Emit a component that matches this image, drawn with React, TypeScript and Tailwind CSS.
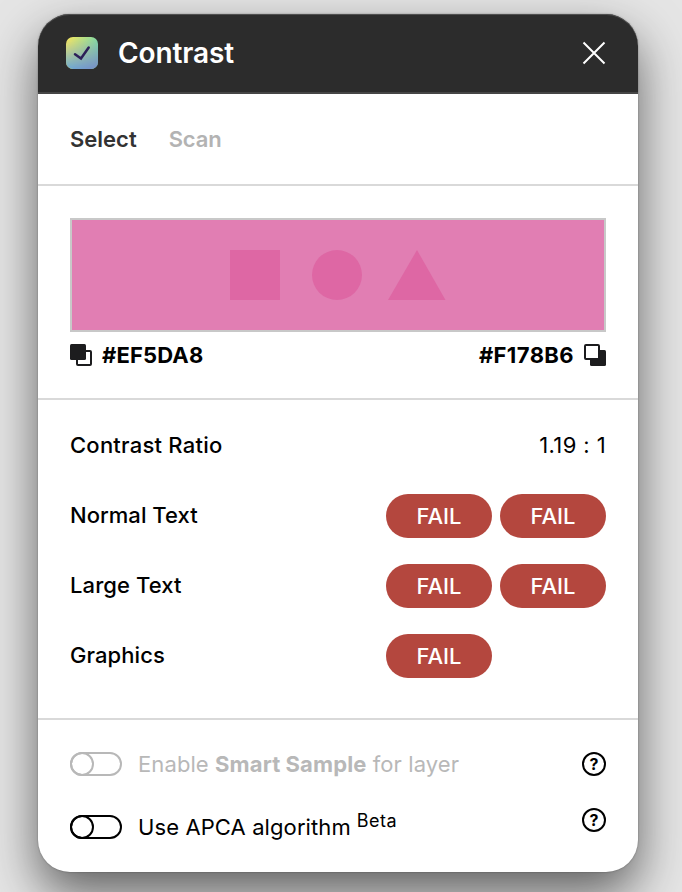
import type { ReactNode } from "react";

function Fail() {
  return (
    <span className="flex h-[44px] w-[106px] items-center justify-center rounded-full bg-[#b4473e] pb-px text-[22px] font-medium leading-7 text-white">
      FAIL
    </span>
  );
}

function Row({ label, tracking, children }: { label: string; tracking: string; children: ReactNode }) {
  return (
    <div className="flex h-[70px] items-center justify-between">
      <span className={`-mt-0.5 text-[22px] font-medium leading-7 ${tracking}`}>{label}</span>
      {children}
    </div>
  );
}

function Toggle() {
  return (
    <svg width="52" height="24" viewBox="0 0 52 24" fill="none" stroke="currentColor" strokeWidth="2">
      <rect x="1" y="1" width="50" height="22" rx="11" />
      <circle cx="12" cy="12" r="11" />
    </svg>
  );
}

function Help() {
  return (
    <span className="flex size-6 items-center justify-center rounded-full border-2 border-black text-[16px] font-bold leading-none text-black">
      ?
    </span>
  );
}

function Swap({ kind }: { kind: "fore" | "back" }) {
  return (
    <svg width="22" height="22" viewBox="0 0 22 22" fill="none">
      {kind === "fore" ? (
        <>
          <rect x="7" y="7" width="14" height="14" rx="1" stroke="#1c1c1e" strokeWidth="2" />
          <rect width="16" height="16" rx="1.5" fill="#1c1c1e" />
        </>
      ) : (
        <>
          <rect x="6" y="6" width="16" height="16" rx="1.5" fill="#1c1c1e" />
          <rect x="1" y="1" width="14" height="14" rx="1" fill="#fff" stroke="#1c1c1e" strokeWidth="2" />
        </>
      )}
    </svg>
  );
}

export default function App() {
  return (
    <div className="h-[892px] w-[682px] overflow-hidden bg-[#e5e5e5] pl-[38px] pt-[14px] font-['Inter',sans-serif] text-black">
      <main className="h-[858px] w-[600px] rounded-[32px] bg-white shadow-[0_0_2px_rgba(0,0,0,0.35),0_22px_50px_rgba(0,0,0,0.58)]">
        <header className="flex h-[80px] items-center rounded-t-[32px] border-b-2 border-[#464646] bg-[#2c2c2c] pl-7 pr-8 shadow-[inset_0_1px_0_#505050]">
          <svg width="32" height="32" viewBox="0 0 32 32" fill="none">
            <defs>
              <linearGradient id="top" x1="0" y1="0" x2="32" y2="0" gradientUnits="userSpaceOnUse">
                <stop stopColor="#ffe959" />
                <stop offset="1" stopColor="#82dda4" />
              </linearGradient>
              <linearGradient id="bottom" x1="0" y1="0" x2="32" y2="0" gradientUnits="userSpaceOnUse">
                <stop stopColor="#6cacd4" />
                <stop offset="1" stopColor="#788bc8" />
              </linearGradient>
              <linearGradient id="fade" x1="0" y1="0" x2="0" y2="32" gradientUnits="userSpaceOnUse">
                <stop stopColor="#000" />
                <stop offset="1" stopColor="#fff" />
              </linearGradient>
              <mask id="blend">
                <rect width="32" height="32" fill="url(#fade)" />
              </mask>
            </defs>
            <rect width="32" height="32" rx="7" fill="url(#top)" />
            <rect width="32" height="32" rx="7" fill="url(#bottom)" mask="url(#blend)" />
            <path d="M9 17.2L15 21.5L22.7 10.5" stroke="#2c1f58" strokeWidth="2.5" strokeLinecap="round" />
          </svg>
          <h1 className="ml-5 text-[28px] font-semibold leading-8 tracking-[-0.1px] text-white">Contrast</h1>
          <svg className="ml-auto" width="24" height="24" viewBox="0 0 24 24" fill="none" stroke="#fff" strokeWidth="2">
            <path d="M1.5 1.5L22.5 22.5M22.5 1.5L1.5 22.5" />
          </svg>
        </header>

        <nav className="flex h-[92px] items-center gap-8 border-b-2 border-[#d9d9d9] px-8 text-[22px] font-semibold leading-7">
          <span className="text-[#333]">Select</span>
          <span className="tracking-[-0.15px] text-[#b3b3b3]">Scan</span>
        </nav>

        <section className="h-[214px] border-b-2 border-[#d9d9d9] px-8 pt-8">
          <div className="flex h-[114px] items-center justify-center border-2 border-[#c8c8c8] bg-[#e17eb3]">
            <svg width="216" height="50" viewBox="0 0 216 50" fill="#de67a4">
              <rect width="50" height="50" />
              <circle cx="107" cy="25" r="25" />
              <path d="M187 0L215.5 50H158Z" />
            </svg>
          </div>
          <div className="mt-[9px] flex h-7 items-center justify-between text-[22px] font-bold leading-7">
            <div className="flex items-center gap-2.5">
              <Swap kind="fore" />
              <span className="tracking-[0.15px]">#EF5DA8</span>
            </div>
            <div className="flex items-center gap-2.5">
              <span className="tracking-[0.4px]">#F178B6</span>
              <Swap kind="back" />
            </div>
          </div>
        </section>

        <section className="h-[320px] border-b-2 border-[#d9d9d9] px-8 pt-[11px]">
          <Row label="Contrast Ratio" tracking="tracking-[0.23px]">
            <span className="-mt-0.5 text-[22px] leading-7 tracking-[0.4px] [font-feature-settings:'calt'_0]">1.19 : 1</span>
          </Row>
          <Row label="Normal Text" tracking="tracking-[0.03px]">
            <div className="flex gap-2"><Fail /><Fail /></div>
          </Row>
          <Row label="Large Text" tracking="tracking-[0.1px]">
            <div className="flex gap-2"><Fail /><Fail /></div>
          </Row>
          <Row label="Graphics" tracking="tracking-[0.08px]">
            <div className="mr-[114px]"><Fail /></div>
          </Row>
        </section>

        <section className="px-8 pt-8 text-[22px] leading-6">
          <div className="flex h-6 items-center text-[#b8b8b8]">
            <Toggle />
            <span className="ml-4 mr-auto tracking-[0.1px]">Enable <b className="font-bold">Smart Sample</b> for layer</span>
            <Help />
          </div>
          <div className="mt-8 flex h-[31px] items-start">
            <div className="mt-[7px]"><Toggle /></div>
            <span className="ml-4 mt-[7px] tracking-[0.1px]">Use APCA algorithm</span>
            <span className="ml-1.5 mr-auto mt-px text-[18px] tracking-[0.5px]">Beta</span>
            <Help />
          </div>
        </section>
      </main>
    </div>
  );
}
